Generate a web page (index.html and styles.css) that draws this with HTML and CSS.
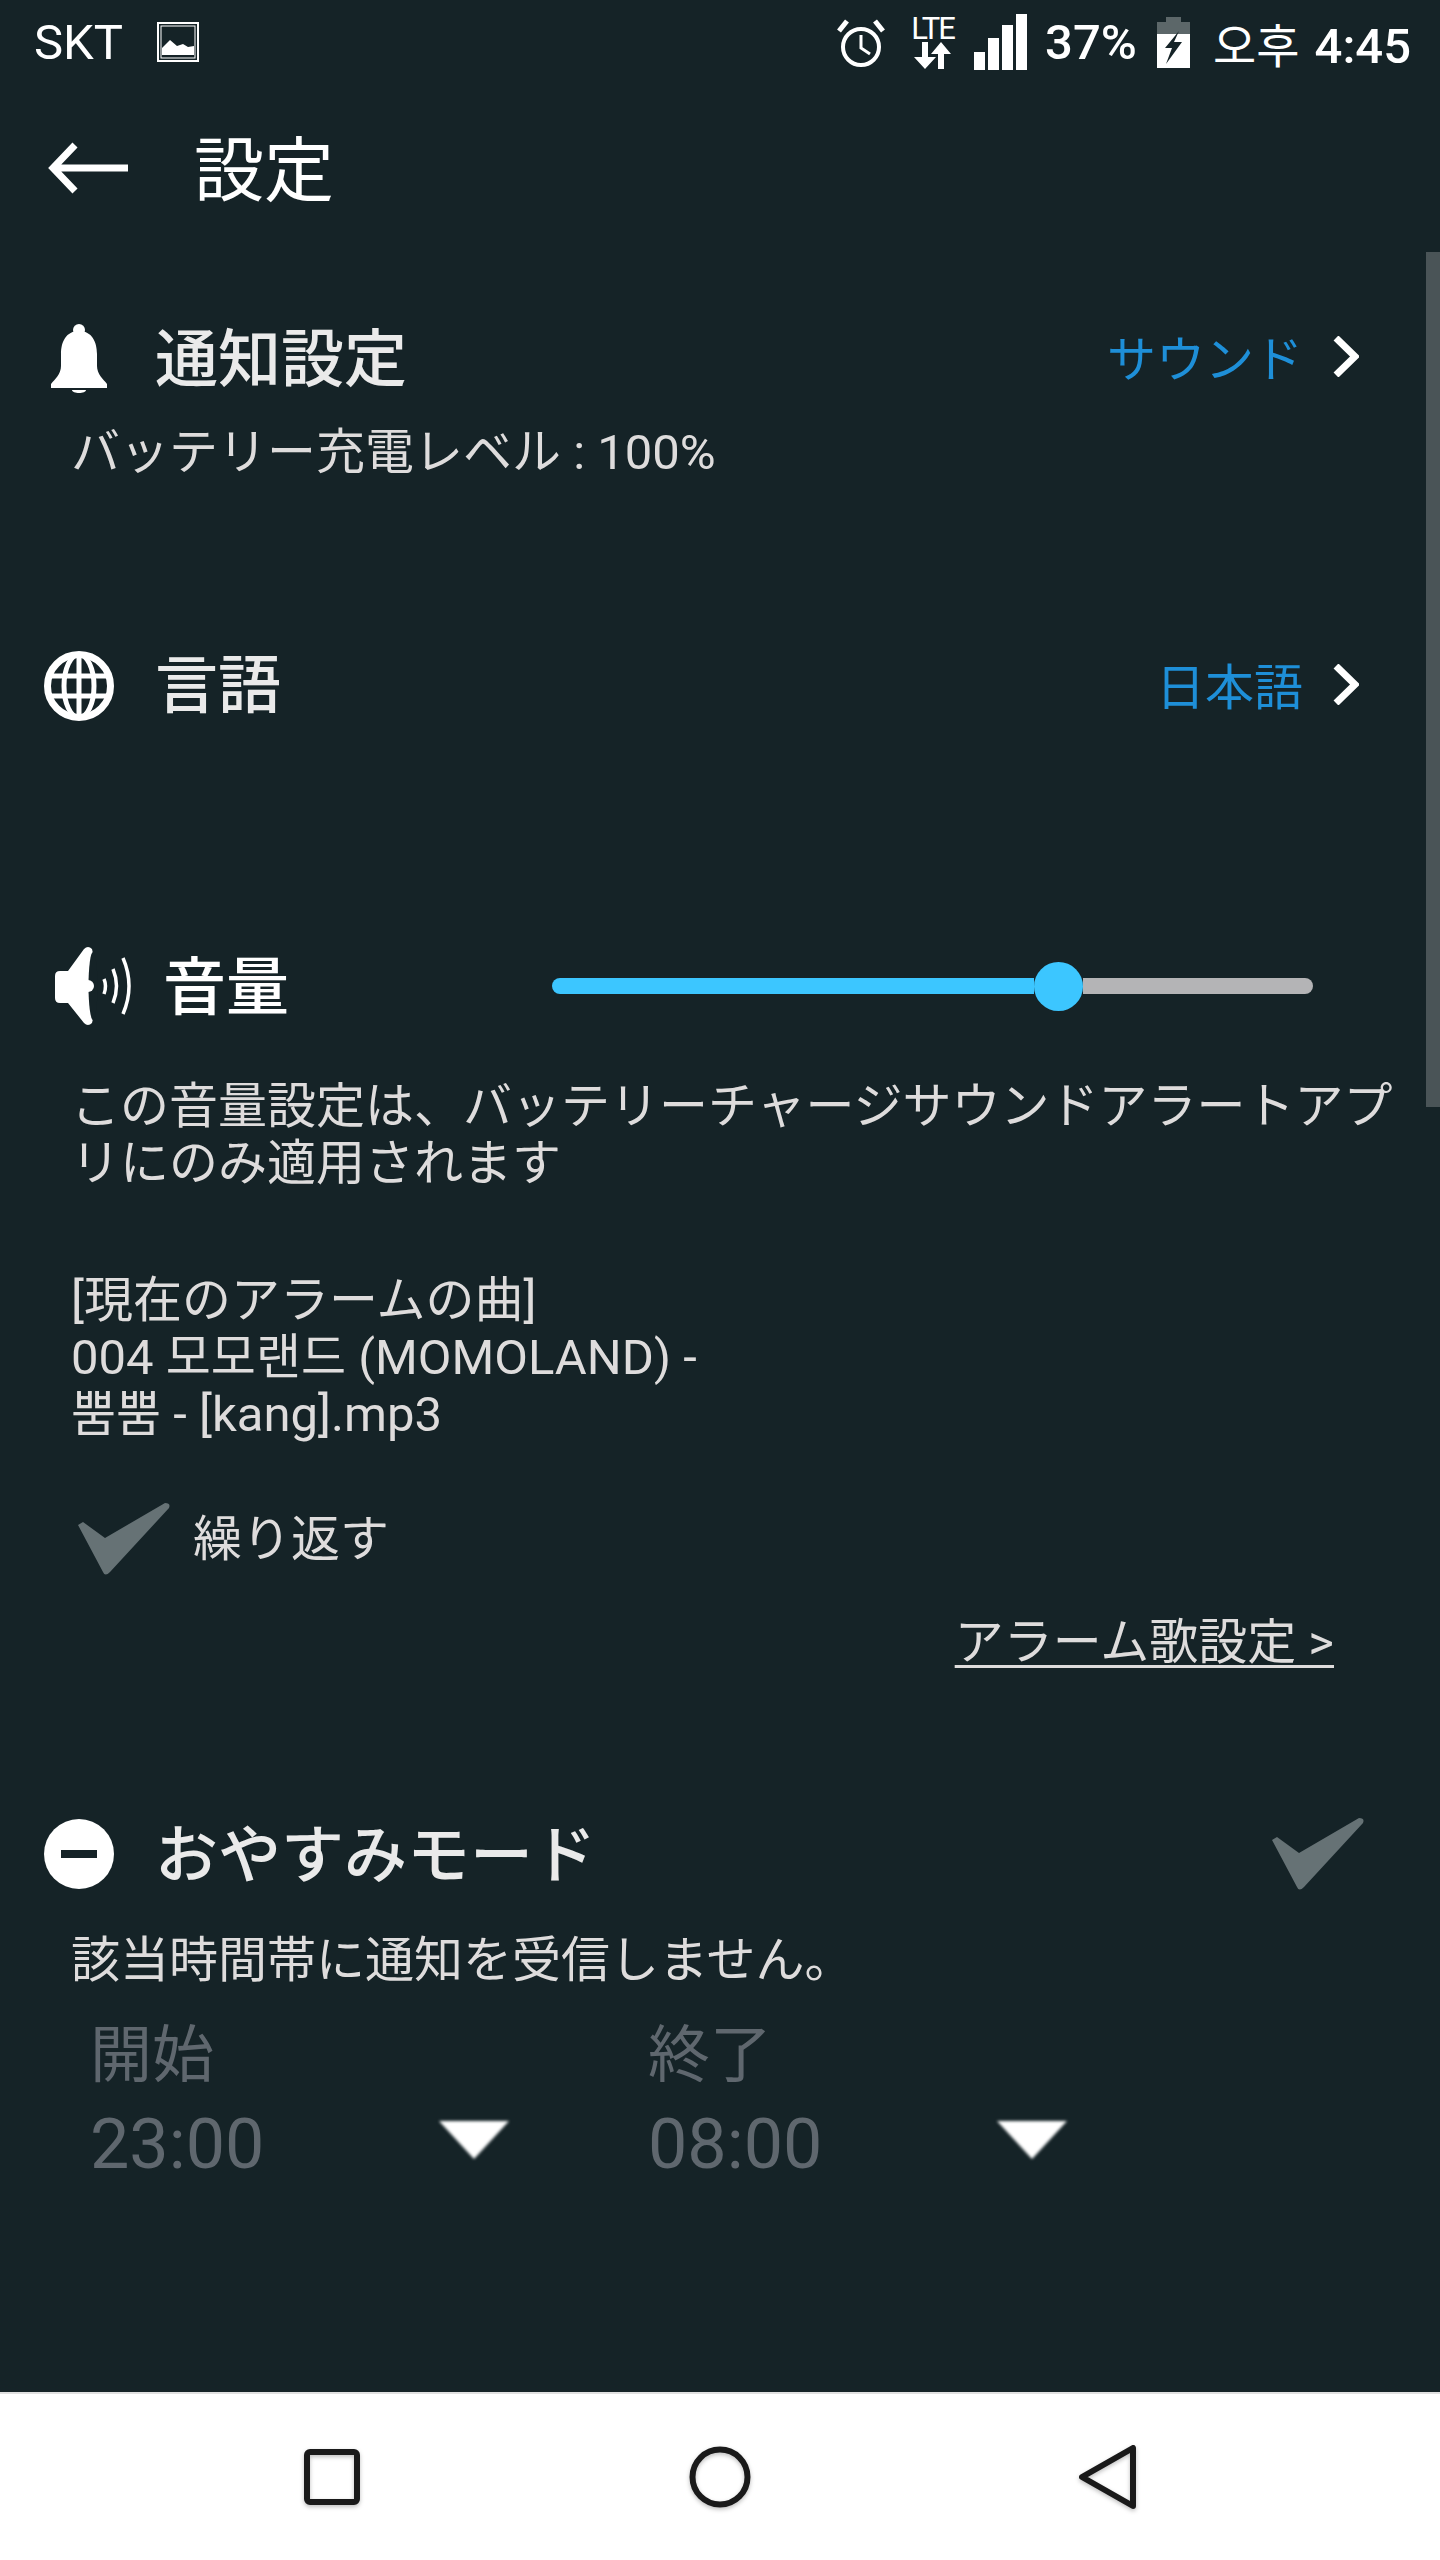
FILE: index.html
```html
<!DOCTYPE html>
<html lang="ja">
<head>
    <meta charset="UTF-8">
    <meta name="viewport" content="width=device-width, initial-scale=1.0">
    <title>設定</title>
    <link rel="stylesheet" href="styles.css">
</head>
<body>

<div class="screen">
    <div class="status-bar">
        <span class="carrier">SKT</span>
        <svg class="icon-picture" width="42" height="40" viewBox="0 0 42 40">
            <rect x="1" y="1" width="40" height="38" fill="none" stroke="#fff" stroke-width="2"/>
            <rect x="4" y="4" width="34" height="32" fill="none" stroke="#fff" stroke-width="1"/>
            <path d="M5 33V26L13 18L20 24L26 22L31 25L37 24V33Z" fill="#fff"/>
        </svg>
        <div class="status-right">
            <svg class="icon-alarm" width="48" height="49" viewBox="0 0 48 49">
                <circle cx="24" cy="29" r="18" fill="none" stroke="#fff" stroke-width="4"/>
                <path d="M24 17V30L33 36" fill="none" stroke="#fff" stroke-width="3"/>
                <path d="M2 13L10 3M46 13L38 3" fill="none" stroke="#fff" stroke-width="5"/>
            </svg>
            <div class="network">
                <span class="lte">LTE</span>
                <svg width="38" height="27" viewBox="0 0 38 27">
                    <path d="M9 0H15V15H23L12 27L1 15H9Z" fill="#fff" transform="translate(-1 0)"/>
                    <path d="M24 27H30V12H37L27 0L17 12H24Z" fill="#fff"/>
                </svg>
            </div>
            <svg class="icon-signal" width="53" height="56" viewBox="0 0 53 56">
                <rect x="0" y="38" width="11" height="18" fill="#fff"/>
                <rect x="14" y="24" width="11" height="32" fill="#fff"/>
                <rect x="28" y="11" width="11" height="45" fill="#fff"/>
                <rect x="42" y="0" width="11" height="56" fill="#fff"/>
            </svg>
            <span class="battery-text">37%</span>
            <svg class="icon-battery" width="33" height="51" viewBox="0 0 33 51">
                <path d="M9 0H24V5H33V17H0V5H9Z" fill="#5c6769"/>
                <rect x="0" y="17" width="33" height="34" fill="#fff"/>
                <path d="M22 14L8 31H15L9 47L25 25H17Z" fill="#152327"/>
            </svg>
            <span class="clock"><span class="clock-ampm">오후</span> <span class="clock-time">4:45</span></span>
        </div>
    </div>

    <div class="toolbar">
        <svg class="icon-back" width="80" height="52" viewBox="0 0 80 52">
            <path d="M80 26H6M27 3L5 26L27 49" fill="none" stroke="#fff" stroke-width="7"/>
        </svg>
        <span class="toolbar-title">設定</span>
    </div>

    <div class="content">
        <div class="scrollbar"></div>

        <div class="row row-notify">
            <div class="row-icon">
                <svg width="56" height="69" viewBox="0 0 56 69">
                    <circle cx="28" cy="6" r="6" fill="#fff"/>
                    <path d="M28 7C15 7 10 18 10 30V42C10 50 4 55 0 60V64H56V60C52 55 46 50 46 42V30C46 18 41 7 28 7Z" fill="#fff"/>
                    <path d="M21 66H35C35 70 21 70 21 66Z" fill="#fff"/>
                </svg>
            </div>
            <span class="row-title">通知設定</span>
            <span class="row-value">サウンド</span>
            <svg class="chevron" width="26" height="41" viewBox="0 0 26 41">
                <path d="M3 2L22 20.5L3 39" fill="none" stroke="#fff" stroke-width="7"/>
            </svg>
        </div>
        <p class="text sub-notify">バッテリー充電レベル : 100%</p>

        <div class="row row-language">
            <div class="row-icon">
                <svg width="70" height="70" viewBox="0 0 70 70">
                    <g fill="none" stroke="#fff">
                        <circle cx="35" cy="35" r="31.5" stroke-width="7"/>
                        <ellipse cx="35" cy="35" rx="15" ry="31.5" stroke-width="5"/>
                        <path d="M35 3V67M5 25H65M5 45H65" stroke-width="5"/>
                    </g>
                </svg>
            </div>
            <span class="row-title title-language">言語</span>
            <span class="row-value">日本語</span>
            <svg class="chevron" width="26" height="41" viewBox="0 0 26 41">
                <path d="M3 2L22 20.5L3 39" fill="none" stroke="#fff" stroke-width="7"/>
            </svg>
        </div>

        <div class="row row-volume">
            <svg class="icon-speaker" width="78" height="80" viewBox="0 0 78 80">
                <path d="M0 30Q0 25 5 25H13L29 3Q33 -1 37 3Q46 40 37 77Q33 81 29 77L13 57H5Q0 57 0 52Z" fill="#fff"/>
                <ellipse cx="38" cy="40" rx="4.5" ry="34" fill="#152327"/>
                <circle cx="33" cy="40" r="6" fill="#fff"/>
                <g fill="none" stroke="#fff" stroke-width="3.5">
                    <path d="M49 33Q52 40 49 48"/>
                    <path d="M58 23Q65 40 58 57"/>
                    <path d="M68 12Q80 40 68 68"/>
                </g>
            </svg>
            <span class="row-title title-volume">音量</span>
            <div class="slider">
                <div class="slider-fill" style="width: 482px"></div>
                <div class="slider-thumb"></div>
                <div class="slider-rest"></div>
            </div>
        </div>
        <p class="text para-volume">この音量設定は、バッテリーチャージサウンドアラートアプリにのみ適用されます</p>

        <p class="text song">[現在のアラームの曲]<br>004 모모랜드 (MOMOLAND) -<br>뿜뿜 - [kang].mp3</p>

        <div class="repeat">
            <svg class="check" width="92" height="72" viewBox="0 0 92 72">
                <path d="M0 22L5 19L27 35L87 0Q93 0 91 5L32 69Q27 74 25 69Z" fill="#667275"/>
            </svg>
            <span class="repeat-label">繰り返す</span>
        </div>

        <div class="link-row"><span class="link">アラーム歌設定 &gt;</span></div>

        <div class="row row-dnd">
            <div class="row-icon">
                <div class="minus-circle"><div class="minus-bar"></div></div>
            </div>
            <span class="row-title">おやすみモード</span>
            <svg class="check check-dnd" width="92" height="72" viewBox="0 0 92 72">
                <path d="M0 22L5 19L27 35L87 0Q93 0 91 5L32 69Q27 74 25 69Z" fill="#667275"/>
            </svg>
        </div>
        <p class="text sub-dnd">該当時間帯に通知を受信しません。</p>

        <div class="times">
            <div class="time-col">
                <div class="time-label">開始</div>
                <div class="time-line">
                    <span class="time-value">23:00</span>
                    <svg class="drop" width="72" height="42" viewBox="0 0 72 42">
                        <path d="M1 2H71L36 40Z" fill="#fff"/>
                    </svg>
                </div>
            </div>
            <div class="time-col">
                <div class="time-label">終了</div>
                <div class="time-line">
                    <span class="time-value">08:00</span>
                    <svg class="drop" width="72" height="42" viewBox="0 0 72 42">
                        <path d="M1 2H71L36 40Z" fill="#fff"/>
                    </svg>
                </div>
            </div>
        </div>
    </div>

    <div class="nav-bar">
        <svg class="nav-icon" width="60" height="60" viewBox="0 0 60 60">
            <rect x="5" y="5" width="50" height="50" rx="3" fill="none" stroke="#1a1a1a" stroke-width="6"/>
        </svg>
        <svg class="nav-icon" width="64" height="64" viewBox="0 0 64 64">
            <circle cx="32" cy="32" r="27.5" fill="none" stroke="#1a1a1a" stroke-width="6"/>
        </svg>
        <svg class="nav-icon" width="60" height="68" viewBox="0 0 60 68">
            <path d="M55 5V63L4 34Z" fill="none" stroke="#1a1a1a" stroke-width="6" stroke-linejoin="round"/>
        </svg>
    </div>
</div>

</body>
</html>
```

FILE: styles.css
```css
body {
    margin: 0;
    background-color: #152327;
    font-family: Roboto, "Noto Sans CJK JP", sans-serif;
    color: #dedcdc;
}
.screen {
    width: 1440px;
    height: 2560px;
    display: flex;
    flex-direction: column;
    overflow: hidden;
}

/* status bar */
.status-bar {
    height: 84px;
    display: flex;
    align-items: center;
    padding: 0 29px 0 34px;
    color: #fff;
    flex-shrink: 0;
}
.carrier {
    font-size: 49px;
}
.icon-picture {
    margin-left: 34px;
}
.status-right {
    margin-left: auto;
    display: flex;
    align-items: center;
}
.network {
    margin-left: 24px;
    width: 47px;
    display: flex;
    flex-direction: column;
    align-items: center;
}
.lte {
    font-size: 31px;
    line-height: 27px;
    letter-spacing: -2px;
}
.icon-signal {
    margin-left: 18px;
}
.battery-text {
    font-size: 49px;
    font-weight: 500;
    margin-left: 18px;
}
.icon-battery {
    margin-left: 20px;
}
.clock {
    margin-left: 23px;
    font-size: 49px;
    white-space: nowrap;
}
.clock-ampm {
    font-size: 47px;
}
.clock-time {
    margin-left: 3px;
    font-weight: 500;
}

/* toolbar */
.toolbar {
    height: 168px;
    display: flex;
    align-items: center;
    padding-left: 48px;
    flex-shrink: 0;
}
.toolbar-title {
    margin-left: 66px;
    margin-bottom: 6px;
    font-size: 70px;
    color: #fff;
}

/* settings list */
.content {
    position: relative;
    flex: 1;
    padding-left: 44px;
}
.scrollbar {
    position: absolute;
    top: 0;
    right: 0;
    width: 14px;
    height: 855px;
    background-color: #4a5457;
}
.row {
    display: flex;
    align-items: center;
    height: 70px;
    padding-right: 81px;
}
.row-icon {
    width: 70px;
    height: 70px;
    display: flex;
    align-items: center;
    justify-content: center;
    flex-shrink: 0;
}
.row-title {
    margin-left: 41px;
    margin-top: 4px;
    font-size: 63px;
    font-weight: 500;
    color: #eaeaea;
    line-height: 70px;
}
.title-language {
    margin-top: 0;
}
.row-value {
    margin-left: auto;
    margin-bottom: 5px;
    font-size: 49px;
    color: #1e8fd8;
}
.chevron {
    margin-left: 30px;
    margin-bottom: 3px;
}
.text {
    margin: 0;
    font-size: 49px;
    line-height: 57px;
    padding-left: 27px;
}
.row-notify {
    margin-top: 71px;
}
.sub-notify {
    margin-top: 31px;
}
.row-language {
    margin-top: 170px;
}
.row-volume {
    margin-top: 225px;
    height: 80px;
}
.icon-speaker {
    margin-left: 11px;
}
.title-volume {
    margin-left: 30px;
    color: #fff;
}
.slider {
    margin-left: 263px;
    width: 761px;
    height: 49px;
    display: flex;
    align-items: center;
}
.slider-fill {
    height: 16px;
    background-color: #3cc6ff;
    border-radius: 8px 0 0 8px;
}
.slider-thumb {
    width: 49px;
    height: 49px;
    border-radius: 50%;
    background-color: #3cc6ff;
    flex-shrink: 0;
}
.slider-rest {
    flex: 1;
    height: 16px;
    background-color: #b4b4b6;
    border-radius: 0 8px 8px 0;
}
.para-volume {
    margin-top: 52px;
    width: 1340px;
}
.song {
    margin-top: 80px;
}
.repeat {
    margin-top: 60px;
    padding-left: 34px;
    height: 72px;
    display: flex;
    align-items: center;
}
.repeat-label {
    margin-left: 23px;
    font-size: 49px;
    line-height: 57px;
}
.link-row {
    margin-top: 39px;
    padding-right: 106px;
    text-align: right;
    height: 57px;
    line-height: 57px;
}
.link {
    font-size: 49px;
    text-decoration: underline;
    text-underline-offset: 6px;
    text-decoration-thickness: 3px;
}
.row-dnd {
    margin-top: 148px;
    padding-right: 76px;
}
.check-dnd {
    margin-left: auto;
}
.minus-circle {
    width: 70px;
    height: 70px;
    border-radius: 50%;
    background-color: #fff;
    display: flex;
    align-items: center;
    justify-content: center;
}
.minus-bar {
    width: 36px;
    height: 8px;
    background-color: #152327;
}
.sub-dnd {
    margin-top: 43px;
}
.times {
    margin-top: 32px;
    padding-left: 46px;
    display: flex;
    color: #5f676e;
}
.time-col {
    width: 558px;
}
.time-label {
    font-size: 62px;
    line-height: 70px;
}
.time-line {
    margin-top: 13px;
    display: flex;
    align-items: center;
    height: 80px;
}
.time-value {
    font-size: 70px;
    width: 348px;
}
.drop {
    filter: blur(1.5px);
    margin-top: -8px;
}

/* bottom navigation */
.nav-bar {
    height: 168px;
    box-sizing: border-box;
    border-top: 2px solid #e0e0e0;
    background-color: #fff;
    display: flex;
    align-items: center;
    flex-shrink: 0;
    padding: 0 302px 0 302px;
    justify-content: space-between;
}
.nav-icon {
    filter: drop-shadow(0 2px 2px rgba(0, 0, 0, 0.25));
}
```
